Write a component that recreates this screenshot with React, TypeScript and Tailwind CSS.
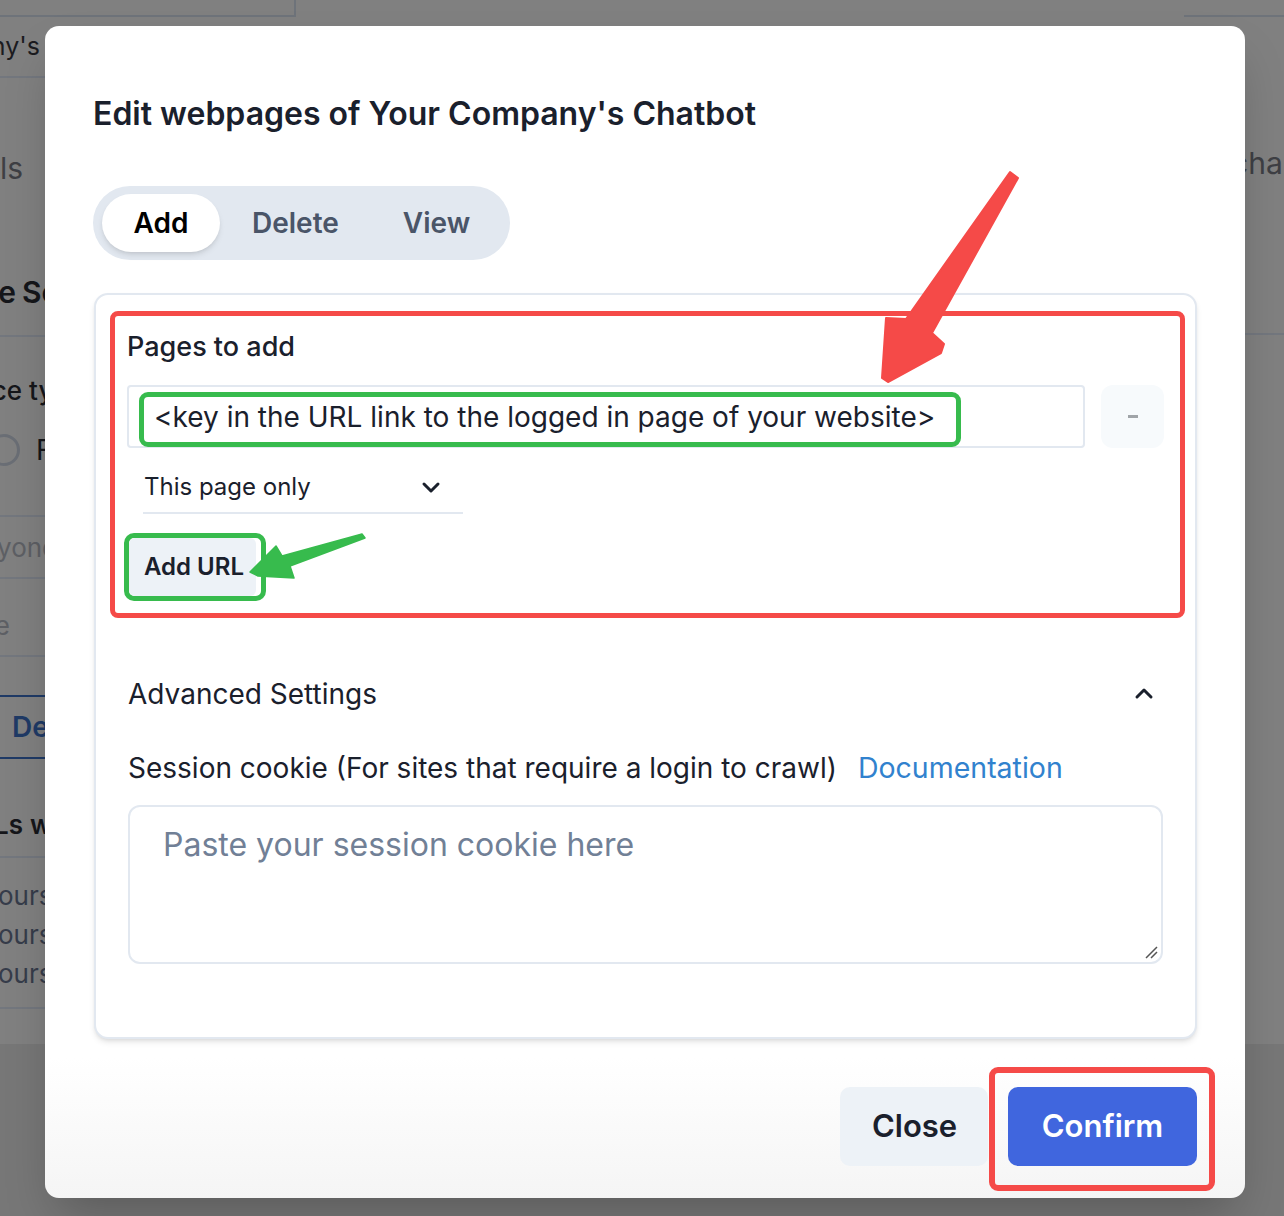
import React from "react";

function ChevronDown() {
  return (
    <svg width="24" height="24" viewBox="0 0 24 24" fill="none" stroke="#1a202c" strokeWidth="3" strokeLinecap="round" strokeLinejoin="round">
      <path d="M5 9l7 7 7-7" />
    </svg>
  );
}

function ChevronUp() {
  return (
    <svg width="24" height="24" viewBox="0 0 24 24" fill="none" stroke="#1a202c" strokeWidth="3" strokeLinecap="round" strokeLinejoin="round">
      <path d="M5 15l7-7 7 7" />
    </svg>
  );
}

function Row({ className, children }: { className: string; children?: React.ReactNode }) {
  return <div className={"flex justify-end whitespace-nowrap " + className}>{children}</div>;
}

function Split({ end, first, gap, second, className }: { end: string; first: string; gap: string; second: string; className: string }) {
  return (
    <div className={"flex items-center whitespace-nowrap " + className}>
      <div className={"flex justify-end " + end}>
        <span>{first}</span>
      </div>
      <span className={gap}>{second}</span>
    </div>
  );
}

export default function App() {
  return (
    <div className="relative w-[1284px] h-[1216px] overflow-hidden bg-[#777777]" style={{ fontFamily: "Inter, 'Noto Sans', sans-serif" }}>
      {/* background page (dimmed) */}
      <div className="h-[1044px] bg-[#808080] flex justify-between">
        <div className="w-[300px] flex flex-col">
          <div className="h-[17px] border-b-2 border-r-2 border-[#6e737a] w-[296px]" />
          <div className="h-[61px] border-b-2 border-[#73777e] w-[60px]">
            <Row className="w-[40px] h-[59px] items-center text-[25px] text-[#1b1b1f]">Your Company's</Row>
          </div>
          <Row className="w-[23px] h-[180px] items-center text-[30px] text-[#3e3f44]">Details</Row>
          <Split className="h-[68px] text-[30px] font-semibold text-[#15161a]" end="w-[16px]" first="Knowledge" gap="ml-[6px]" second="Source" />
          <div className="h-[11px] border-b-2 border-[#73777e] w-[60px]" />
          <div className="h-[23px]" />
          <Split className="h-[60px] text-[26px] font-medium text-[#15161a]" end="w-[22px]" first="Source" gap="ml-[7px]" second="type" />
          <div className="h-[60px] flex items-center gap-4 -ml-[12px]">
            <div className="w-[32px] h-[32px] rounded-full border-[3px] border-[#6a6e75]" />
            <span className="text-[28px] text-[#15161a]">F</span>
          </div>
          <div className="h-[37px] border-b-2 border-[#73777e] w-[60px]" />
          <div className="h-[62px] border-b-2 border-[#73777e] w-[60px]">
            <Row className="w-[58px] h-[60px] items-center text-[26px] text-[#5d5f64]">Beyond</Row>
          </div>
          <div className="h-[78px] border-b-2 border-[#73777e] w-[60px] pt-[30px]">
            <Row className="w-[10px] h-[32px] items-center text-[26px] text-[#5d5f64]">Type</Row>
          </div>
          <div className="h-[38px]" />
          <div className="h-[64px] flex items-center pl-[12px] text-[28px] font-semibold text-[#1f3a66] border-y-2 border-[#1f3a66] whitespace-nowrap w-[60px]">Details</div>
          <div className="h-[99px] border-b-2 border-[#73777e] w-[60px] pt-[49px]">
            <Split className="h-[32px] text-[26px] font-semibold text-[#15161a]" end="w-[23px]" first="URLs" gap="ml-[7px]" second="with" />
          </div>
          <div className="flex flex-col pt-[18px] text-[26px] text-[#363c4a] leading-[39px] whitespace-nowrap -ml-[2px]">
            <span>ours</span>
            <span>ours</span>
            <span>ours</span>
          </div>
          <div className="h-[16px] border-b-2 border-[#73777e] w-[60px]" />
        </div>
        <div className="w-[100px] flex flex-col">
          <div className="h-[17px] border-b-2 border-[#6e737a]" />
          <div className="h-[302px] flex items-center text-[30px] text-[#3e3f44] whitespace-nowrap pl-[47px]">
            <span className="-mt-[10px]">cha</span>
          </div>
          <div className="h-[16px] border-b-2 border-[#73777e]" />
        </div>
      </div>

      {/* modal */}
      <div className="absolute left-[45px] top-[26px] w-[1200px] h-[1172px] rounded-[14px] bg-gradient-to-b from-white from-[88%] to-[#f5f5f5] shadow-2xl px-[48px] pt-[94px]">
        <h2 className="text-[32px] leading-[40px] font-semibold text-[#1a202c] -mt-[26px]">Edit webpages of Your Company's Chatbot</h2>

        <div className="mt-[52px] w-[417px] h-[74px] rounded-full bg-[#e2e8f0] flex items-center px-[9px] gap-[32px]">
          <div className="w-[118px] h-[58px] rounded-full bg-white shadow-md flex items-center justify-center text-[28px] font-semibold text-black">Add</div>
          <div className="text-[28px] font-semibold text-[#4a5568]">Delete</div>
          <div className="text-[28px] font-semibold text-[#4a5568] ml-[32px]">View</div>
        </div>

        <div className="mt-[33px] ml-[1px] w-[1103px] h-[746px] rounded-[14px] border-2 border-[#e2e8f0] shadow-md bg-white pl-[14px] pr-[10px] pt-[16px]">
          {/* Pages to add (red annotation) */}
          <div className="rounded-[8px] border-[5px] border-[#f54a48] h-[307px] pl-[12px] pr-[16px] pt-[15px]">
            <div className="text-[27px] leading-[32px] font-medium text-[#1a202c]">Pages to add</div>
            <div className="mt-[22px] flex gap-[16px]">
              <div className="relative flex-1 h-[63px] border-2 border-[#e2e8f0] rounded-[4px] flex items-center pl-[25px]">
                <span className="text-[28px] text-[#1a202c] whitespace-nowrap">&lt;key in the URL link to the logged in page of your website&gt;</span>
                <div className="absolute left-[10px] top-[5px] w-[822px] h-[55px] border-[5px] border-[#37bb4d] rounded-[9px]" />
              </div>
              <div className="w-[63px] h-[63px] rounded-[12px] bg-[#f7fafc] flex items-center justify-center">
                <div className="w-[10px] h-[3px] bg-[#a0a4a8]" />
              </div>
            </div>
            <div className="mt-[13px] ml-[16px] w-[320px] h-[53px] border-b-2 border-[#e2e8f0] flex items-center justify-between pl-[1px] pr-[20px]">
              <span className="text-[24px] text-[#1a202c]">This page only</span>
              <ChevronDown />
            </div>
            <div className="mt-[19px] -ml-[3px] w-[142px] h-[68px] border-[5px] border-[#37bb4d] rounded-[10px] flex items-center">
              <div className="w-[127px] h-[58px] rounded-[6px] bg-[#edf2f7] flex items-center pl-[15px] text-[24px] font-semibold text-[#1a202c]">Add URL</div>
            </div>
          </div>

          <div className="pl-[18px] pr-[22px]">
            <div className="mt-[55px] flex items-center justify-between pr-[7px]">
              <span className="text-[28px] text-[#1a202c]">Advanced Settings</span>
              <ChevronUp />
            </div>
            <div className="mt-[32px] flex items-center gap-[21px]">
              <span className="text-[28px] text-[#1a202c]">Session cookie (For sites that require a login to crawl)</span>
              <span className="text-[28.5px] text-[#3182ce]">Documentation</span>
            </div>
            <div className="relative mt-[15px] h-[159px] border-2 border-[#e2e8f0] rounded-[12px] pl-[33px] pt-[14px]">
              <span className="text-[32px] text-[#718096]">Paste your session cookie here</span>
              <svg className="absolute right-[3px] bottom-[3px]" width="14" height="14" viewBox="0 0 14 14" stroke="#555" strokeWidth="1.5">
                <path d="M2 13L13 2M7 13L13 7" />
              </svg>
            </div>
          </div>
        </div>

        <div className="mt-[48px] flex justify-end gap-[20px]">
          <div className="w-[148px] h-[79px] rounded-[10px] bg-[#edf2f7] flex items-center pl-[32px] text-[31px] font-semibold text-[#1a202c]">Close</div>
          <div className="relative w-[189px] h-[79px] rounded-[10px] bg-[#4066de] flex items-center justify-center text-[31px] font-semibold text-white">
            Confirm
            <div className="absolute -left-[19px] -top-[20px] -right-[18px] -bottom-[25px] border-[6px] border-[#f54a48] rounded-[9px]" />
          </div>
        </div>
      </div>

      {/* annotation arrows */}
      <svg className="absolute left-0 top-0 pointer-events-none" width="1284" height="1216">
        <polygon points="1010,172 1018,178 932,333 944,344 941,353 888,382 882,378 886,318 906,319" fill="#f54a48" stroke="#f54a48" strokeWidth="2" strokeLinejoin="round" />
        <polygon points="250,572 276,546 282,556 362,534 365,538 290,566 294,578 258,576" fill="#37bb4d" stroke="#37bb4d" strokeWidth="1.5" strokeLinejoin="round" />
      </svg>
    </div>
  );
}
